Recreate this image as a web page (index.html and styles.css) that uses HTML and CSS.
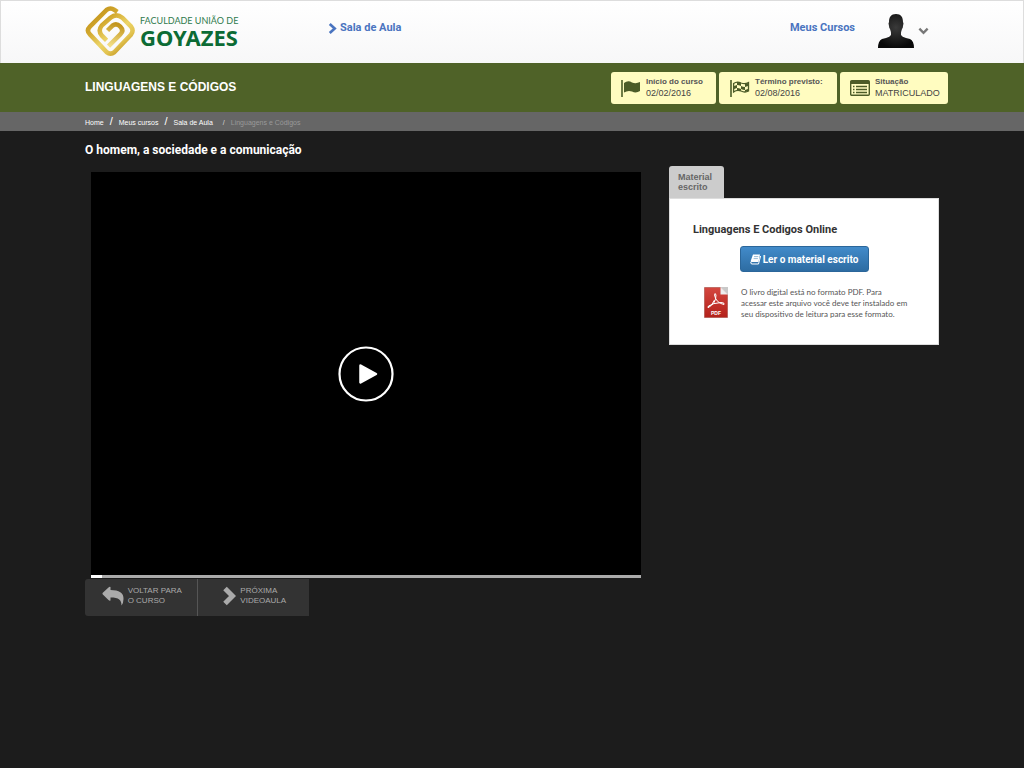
FILE: index.html
```html
<!DOCTYPE html>
<html lang="pt-BR">
<head>
<meta charset="utf-8">
<meta name="viewport" content="width=device-width, initial-scale=1">
<title>Linguagens e Códigos</title>
<link rel="stylesheet" href="styles.css">
</head>
<body>
<header class="topbar">
  <div class="container topbar-inner">
    <a class="logo" href="#">
      <svg class="logo-mark" viewBox="0 0 52 52" aria-hidden="true">
        <defs>
          <linearGradient id="gold" gradientUnits="userSpaceOnUse" x1="8" y1="4" x2="42" y2="46">
            <stop offset="0" stop-color="#c09018"/><stop offset=".3" stop-color="#d2a82e"/>
            <stop offset=".6" stop-color="#ecd468"/><stop offset=".8" stop-color="#e2c350"/><stop offset="1" stop-color="#c2951f"/>
          </linearGradient>
          <linearGradient id="gold-in" gradientUnits="userSpaceOnUse" x1="30" y1="18" x2="24" y2="40">
            <stop offset="0" stop-color="#c3961e"/><stop offset="1" stop-color="#f3df86"/>
          </linearGradient>
        </defs>
        <path d="M33 6L30 4Q26 1 22 4L5 21Q1 25 5 29L22 47Q26 50 30 47L47 29Q50 25 47 21L38 12Q32 7 26 12L17 20Q13 25 17 30L22 35" fill="none" stroke="url(#gold)" stroke-width="4.600"/>
        <path d="M23 25L28 20Q32 17 36 21Q40 25 36 29L24 41" fill="none" stroke="url(#gold-in)" stroke-width="4.600"/>
      </svg>
      <span class="logo-text"><span class="logo-small">FACULDADE UNIÃO DE</span><span class="logo-big">GOYAZES</span></span>
    </a>
    <a class="nav-link room" href="#"><svg class="chev" viewBox="0 0 8 10" aria-hidden="true"><path d="M1.5 1L6 5L1.5 9" fill="none" stroke="currentColor" stroke-width="2.4"/></svg>Sala de Aula</a>
    <a class="nav-link courses" href="#">Meus Cursos</a>
    <button class="user" type="button" aria-label="Menu do usuário">
      <svg class="avatar" viewBox="0 0 36 36" aria-hidden="true">
        <defs><radialGradient id="bust" cx=".5" cy=".4" r=".6"><stop offset="0" stop-color="#3a3a3a"/><stop offset="1" stop-color="#090909"/></radialGradient></defs>
        <path d="M18 1C23 1 25 4 25 9Q26 10 25 13Q25 15 24 16Q23 19 23 20V22Q24 24 28 25L32 26Q36 28 36 35H0Q0 28 4 26L8 25Q12 24 13 22V20Q13 19 12 16Q11 15 11 13Q10 10 11 9C11 4 13 1 18 1Z" fill="url(#bust)"/>
      </svg>
      <svg class="caret" viewBox="0 0 12 8" aria-hidden="true"><path d="M1.5 1.5L6 6L10.500 1.500" fill="none" stroke="#777" stroke-width="2.600"/></svg>
    </button>
  </div>
</header>

<div class="course-bar">
  <div class="container course-inner">
    <h1 class="course-title">LINGUAGENS E CÓDIGOS</h1>
    <ul class="badges">
      <li class="badge">
        <svg class="badge-icon" viewBox="0 0 20 18" aria-hidden="true"><path d="M1 1V18" stroke="#4c5c28" stroke-width="1.600"/><path d="M3 4Q7 1 11 3.500Q15 5 19 3V12Q15 14.500 11 12.500Q7 11 3 13.500Z" fill="#4c5c28"/></svg>
        <span><strong>Início do curso</strong><span class="value">02/02/2016</span></span>
      </li>
      <li class="badge badge-end">
        <svg class="badge-icon" viewBox="0 0 20 18" aria-hidden="true"><path d="M1 1V18" stroke="#4c5c28" stroke-width="1.600"/><path d="M3.600 4.500Q7 2 11 4Q15 5.500 18.500 3.500V12Q15 14 11 12Q7 10.500 3.600 13Z" fill="none" stroke="#4c5c28" stroke-width="1.300"/><path d="M7 3Q9 3 11 4V7Q9 6 7 6ZM15 5L18 4V7L15 8ZM4 7L7 6V9L4 10ZM11 7Q13 8 15 8V11Q13 11 11 10ZM7 9Q9 9 11 10V12Q9 11 7 11ZM15 11L18 10V12L15 13Z" fill="#4c5c28"/></svg>
        <span><strong>Término previsto:</strong><span class="value">02/08/2016</span></span>
      </li>
      <li class="badge badge-status">
        <svg class="badge-icon" viewBox="0 0 20 18" aria-hidden="true"><rect x=".7" y="1.700" width="18.600" height="14.600" rx="1" fill="none" stroke="#4c5c28" stroke-width="1.400"/><path d="M1 2H19V5H1Z" fill="#4c5c28"/><path d="M3 7.500H4.500M6 7.500H17M3 10.500H4.500M6 10.500H17M3 13.500H4.500M6 13.500H17" stroke="#4c5c28" stroke-width="1.300"/></svg>
        <span><strong>Situação</strong><span class="value">MATRICULADO</span></span>
      </li>
    </ul>
  </div>
</div>

<nav class="crumbs" aria-label="Trilha">
  <ol class="container crumb-list">
    <li><a href="#">Home</a></li>
    <li><span class="sep">/</span><a href="#">Meus cursos</a></li>
    <li><span class="sep">/</span><a href="#">Sala de Aula</a></li>
    <li class="current"><span class="sep">/</span>Linguagens e Códigos</li>
  </ol>
</nav>

<main class="container">
  <h2 class="lesson-title">O homem, a sociedade e a comunicação</h2>
  <div class="columns">
    <section class="lesson">
      <div class="player">
        <button class="play" type="button" aria-label="Reproduzir">
          <svg viewBox="0 0 56 56" aria-hidden="true"><circle cx="28" cy="28" r="26.500" fill="none" stroke="#fff" stroke-width="2.200"/><path d="M22.500 19.500L38 28L22.500 36.500Z" fill="#fff" stroke="#fff" stroke-width="2.500" stroke-linejoin="round"/></svg>
        </button>
        <div class="track"><div class="progress"></div></div>
      </div>
      <div class="actions">
        <button class="action" type="button">
          <svg class="back-icon" viewBox="0 0 22 20" aria-hidden="true"><path d="M8.500 1V4C17 4 22 7 21.500 13Q21.500 17 19.500 19.500C19.500 14 17 11.500 8.500 11.500V14.500Q7.500 15 6.500 14L.8 8.500Q0 7.500 .8 6.800L6.500 1.500Q7.500 .5 8.500 1Z" fill="#aaa"/></svg>
          <span>VOLTAR PARA<br>O CURSO</span>
        </button>
        <button class="action" type="button">
          <svg class="next-icon" viewBox="0 0 14 20" aria-hidden="true"><path d="M3 2.500L10.500 10L3 17.500" fill="none" stroke="#aaa" stroke-width="5"/></svg>
          <span>PRÓXIMA<br>VIDEOAULA</span>
        </button>
      </div>
    </section>

    <aside class="material">
      <button class="tab" type="button">Material<br>escrito</button>
      <div class="panel">
        <h3 class="panel-title">Linguagens E Codigos Online</h3>
        <a class="read" href="#"><svg class="book" viewBox="0 0 11 11" aria-hidden="true"><path d="M3 .5H10L8.500 8H1.500Q.5 8 .7 7Z" fill="#fff"/><path d="M.8 8Q.5 10 2 10H8.500L10.600 2" fill="none" stroke="#fff" stroke-width="1"/><path d="M4 2.600H8.300M3.600 4.600H7.900" stroke="#3276b1" stroke-width=".5"/></svg>Ler o material escrito</a>
        <div class="note">
          <svg class="pdf" viewBox="0 0 24 31" aria-hidden="true">
            <defs><linearGradient id="pdf-red" x1="0" y1="0" x2="0" y2="1"><stop offset="0" stop-color="#d4473f"/><stop offset="1" stop-color="#b3211b"/></linearGradient></defs>
            <path d="M.5 .5H17L23.500 7V30.500H.5Z" fill="url(#pdf-red)" stroke="#a5483f" stroke-width=".6"/>
            <path d="M16.500 0H24V7.500Z" fill="#c9c9c9"/><path d="M16.500 0V7.500H24Z" fill="#eee"/>
            <path d="M4 20Q12 17 12 8Q11 5 10.500 8Q12 16 20 17.500Q21 15.500 17 15.500Q9 16 4.500 19Q3 21 5 20.500Q8 18 10.500 13" fill="none" stroke="#fff" stroke-width="1"/>
            <text class="pdf-label" x="12" y="28" text-anchor="middle">PDF</text>
          </svg>
          <p>O livro digital está no formato PDF. Para<br>acessar este arquivo você deve ter instalado em<br>seu dispositivo de leitura para esse formato.</p>
        </div>
      </div>
    </aside>
  </div>
</main>
</body>
</html>
```

FILE: styles.css
```css
* { box-sizing: border-box; }
body {
  margin: 0;
  min-height: 100vh;
  background: #1c1c1c;
  color: #fff;
  font-family: "Liberation Sans", Arial, sans-serif;
  font-size: 11px;
}
h1, h2, h3, p, ul, ol { margin: 0; padding: 0; }
ul, ol { list-style: none; }
a { color: inherit; text-decoration: none; }
button { font: inherit; color: inherit; border: 0; padding: 0; background: none; cursor: pointer; }
svg { display: block; flex: none; }
.container { max-width: 854px; margin: 0 auto; }

.topbar { border: 1px solid #ddd; border-bottom: 0; background: linear-gradient(#fff, #f7f7f8); }
.topbar-inner { display: flex; align-items: flex-start; height: 62px; }
.logo { display: flex; align-items: center; gap: 4px; width: 243px; padding-top: 5px; }
.logo-mark { width: 51px; height: 51px; }
.logo-text { display: flex; flex-direction: column; gap: 1px; padding-bottom: 2px; white-space: nowrap; }
.logo-small { color: #2e7a4c; font: 9px/11px Lato, sans-serif; }
.logo-big { color: #0c6b35; font: bold 22px/20px "Noto Sans", sans-serif; }
.nav-link { color: #4a74c0; font-family: Roboto, Arial, sans-serif; font-weight: bold; line-height: 14px; margin-top: 20px; }
.room { display: flex; align-items: center; gap: 3px; }
.chev { width: 9px; height: 11px; }
.courses { margin-left: auto; }
.user { display: flex; align-items: center; gap: 4px; margin: 12px 10px 0 23px; }
.avatar { width: 36px; height: 36px; }
.caret { width: 11px; height: 8px; }

.course-bar { background: #4f6228; }
.course-inner { display: flex; justify-content: space-between; height: 49px; }
.course-title { font-size: 12px; line-height: 16px; padding-top: 16px; }
.badges { display: flex; gap: 3px; padding-top: 9px; margin-right: -9px; }
.badge {
  display: flex;
  align-items: center;
  gap: 5px;
  width: 105px;
  height: 32px;
  padding-left: 10px;
  border-radius: 3px;
  background: #fffcc0;
  color: #555;
  white-space: nowrap;
}
.badge-end { width: 118px; padding-left: 11px; }
.badge-status { width: 108px; }
.badge-icon { width: 20px; height: 18px; }
.badge strong { display: block; font-size: 8px; line-height: 10px; }
.value { display: block; color: #444; font-size: 9px; line-height: 13px; }

.crumbs { background: #666; }
.crumb-list { display: flex; height: 19px; align-items: baseline; font-size: 7px; line-height: 19px; }
.sep { font-size: 11px; margin: 0 6px; }
.current { color: #999; }
.current .sep { color: #ddd; font-size: 7px; margin: 0 6px 0 10px; }

.lesson-title { font-family: Roboto, Arial, sans-serif; font-size: 12px; line-height: 16px; padding-top: 11px; }
.columns { display: flex; justify-content: space-between; gap: 28px; margin-top: 8px; }
.lesson { flex: 1; max-width: 556px; padding-top: 6px; }
.player {
  display: grid;
  grid-template-rows: 1fr 3px;
  aspect-ratio: 550 / 406;
  margin-left: 6px;
  background: #000;
}
.play { place-self: center; width: 56px; height: 56px; }
.track { background: #aaa; }
.progress { width: 2%; height: 3px; background: #fff; }
.actions { display: flex; width: 224px; margin-top: 1px; border-radius: 3px 0 0 3px; background: #333; }
.action {
  display: flex;
  flex: 1;
  align-items: center;
  justify-content: center;
  gap: 4px;
  height: 37px;
  padding: 0 0 3px 2px;
  color: #aaa;
  font-size: 8px;
  line-height: 10px;
  text-align: left;
}
.action + .action { border-left: 1px solid #555; }
.back-icon { width: 22px; height: 20px; }
.next-icon { width: 14px; height: 20px; }

.material { width: 270px; }
.tab {
  display: block;
  width: 55px;
  height: 32px;
  padding-left: 9px;
  border-radius: 3px 3px 0 0;
  background: #ccc;
  color: #666;
  font-size: 9px;
  font-weight: bold;
  line-height: 10px;
  text-align: left;
}
.panel { padding: 24px 23px; border: 1px solid #ddd; background: #fff; color: #333; }
.panel-title { font-family: Roboto, Arial, sans-serif; font-size: 11px; line-height: 14px; }
.read {
  display: flex;
  align-items: center;
  justify-content: center;
  gap: 2px;
  width: 129px;
  height: 26px;
  margin: 9px auto 0;
  border: 1px solid #2b669a;
  border-radius: 3px;
  background: linear-gradient(#428bca, #2d6ca2);
  color: #fff;
  font-family: Roboto, Arial, sans-serif;
  font-weight: bold;
  font-size: 10px;
  white-space: nowrap;
}
.book { width: 11px; height: 11px; }
.note { display: flex; gap: 13px; margin: 15px 0 0 11px; color: #555; font-family: Lato, Arial, sans-serif; font-size: 8px; line-height: 11px; }
.note p { white-space: nowrap; }
.pdf { width: 24px; height: 31px; }
.pdf-label { fill: #fff; font: bold 5px "Liberation Sans", Arial, sans-serif; }

@media (max-width: 870px) {
  .container { padding-left: 10px; padding-right: 10px; }
  .badges { margin-right: 0; }
  .columns { flex-wrap: wrap; }
  .lesson { flex-basis: 100%; }
}
```
